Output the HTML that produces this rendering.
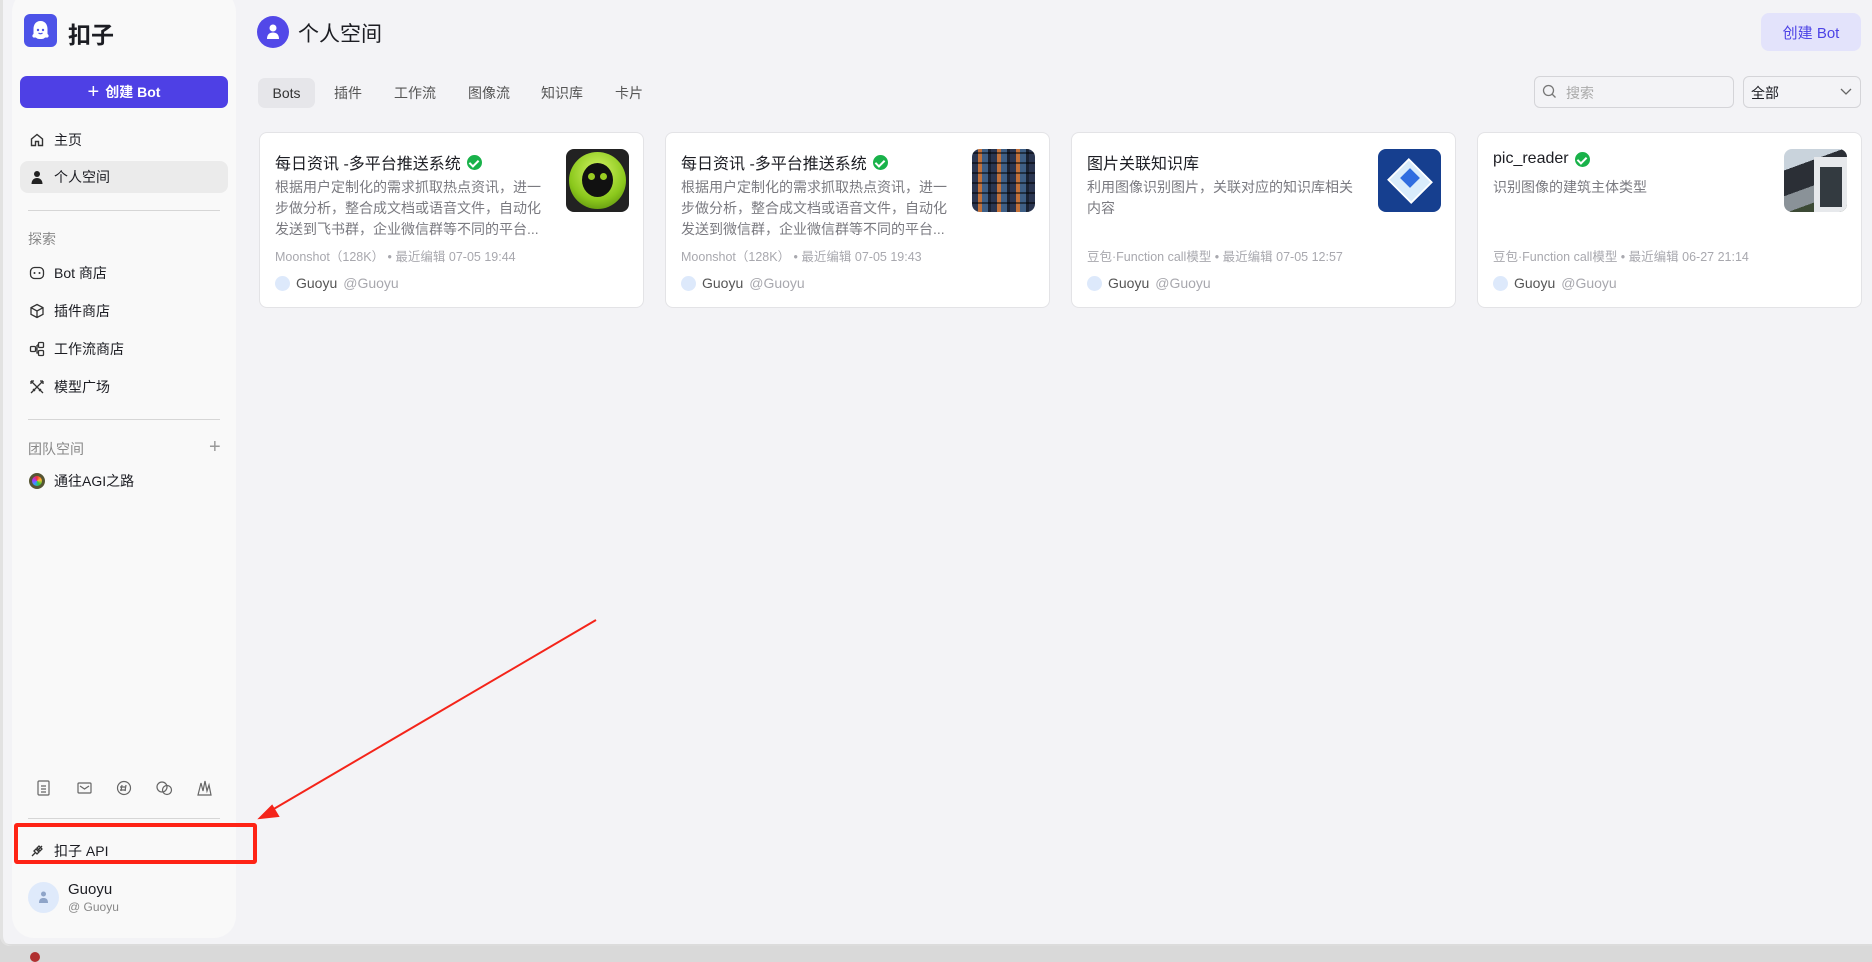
<!DOCTYPE html>
<html><head><meta charset="utf-8"><style>
*{box-sizing:border-box;margin:0;padding:0}
body{width:1872px;height:958px;overflow:hidden;background:#d9d9d9;font-family:"Liberation Sans","Noto Sans CJK SC",sans-serif;color:#1c1d23;position:relative}
.win{position:absolute;left:0;top:0;width:1872px;height:946px;background:#f3f3f6;box-shadow:inset 3px 0 0 #e2e2e2,inset 0 -2px 0 #dcdcdc;border-radius:0 0 0 10px}
.abs{position:absolute}
.side{position:absolute;left:12px;top:-10px;width:224px;height:948px;background:#f9f9f9;border-radius:22px}
.nav{position:absolute;left:20px;width:208px;height:32px;font-size:14px;display:flex;align-items:center;padding-left:9px;gap:9px;color:#1c1d23}
.nav svg{width:16px;height:16px}
.hr{position:absolute;left:28px;width:192px;height:1px;background:#d6d6d6}
.grey{color:#888;font-size:14px}
.tab{position:absolute;top:78px;height:30px;font-size:14px;line-height:30px;color:#555;text-align:center}
.card{position:absolute;top:132px;width:385px;height:176px;background:#fff;border:1px solid #e3e3e6;border-radius:8px}
.card .t{position:absolute;left:15px;top:17px;font-size:16px;color:#1c1d23;display:flex;align-items:center;gap:6px}
.ok{width:15px;height:15px;border-radius:50%;background:#19b24a;display:inline-block;position:relative}
.ok:after{content:"";position:absolute;left:4px;top:3px;width:4px;height:7px;border:solid #fff;border-width:0 2px 2px 0;transform:rotate(45deg)}
.card .d{position:absolute;left:15px;top:44px;width:270px;font-size:14px;line-height:21px;color:#7a7a80}
.card .m{position:absolute;left:15px;top:113px;font-size:12.5px;color:#a8a8ae;white-space:nowrap}
.card .u{position:absolute;left:15px;top:142px;font-size:14px;color:#555;display:flex;align-items:center;gap:6px}
.card .u i{width:15px;height:15px;border-radius:50%;background:#dde9fb;display:inline-block}
.card .u span{color:#a8a8ae}
.thumb{position:absolute;right:14px;top:16px;width:63px;height:63px;border-radius:8px;overflow:hidden}
</style></head><body>
<div class="win">
<div class="side"></div>
<div class="abs" style="left:24px;top:14px;width:33px;height:33px;background:#4d53e8;border-radius:6px"></div>
<svg class="abs" style="left:28px;top:18px" width="25" height="25" viewBox="0 0 25 25"><path d="M12.5 3C7.5 3 5.5 7 5.5 11v5c-1.5 1-1.5 3 0 3.5 1 .5 2-.5 3 .5 1 1 2.5 1 4 1s3 0 4-1 2-0 3-.5c1.5-.5 1.5-2.5 0-3.5v-5c0-4-2-8-7-8z" fill="#fff"/><circle cx="10" cy="12" r="1.2" fill="#4d53e8"/><circle cx="15" cy="12" r="1.2" fill="#4d53e8"/><path d="M10.5 15q2 1.5 4 0" stroke="#4d53e8" stroke-width="1.2" fill="none"/></svg>
<div class="abs" style="left:68px;top:16px;font-size:23px;font-weight:bold">扣子</div>
<div class="abs" style="left:20px;top:76px;width:208px;height:32px;background:#4e40e5;border-radius:7px;color:#fff;font-size:14px;font-weight:bold;display:flex;align-items:center;justify-content:center;gap:6px"><span style="font-size:20px;font-weight:normal;line-height:1">+</span>创建 Bot</div>
<div class="nav" style="top:124px"><svg viewBox="0 0 16 16"><path d="M2.5 7L8 2.5 13.5 7v6.5h-4v-4h-3v4h-4z" fill="none" stroke="#333" stroke-width="1.4"/></svg>主页</div>
<div class="nav" style="top:161px;background:#ebebeb;border-radius:8px"><svg viewBox="0 0 16 16"><circle cx="8" cy="5" r="3" fill="#222"/><path d="M2.5 15c0-4 2.5-6 5.5-6s5.5 2 5.5 6z" fill="#222"/></svg>个人空间</div>
<div class="hr" style="top:210px"></div>
<div class="abs grey" style="left:28px;top:229px">探索</div>
<div class="nav" style="top:257px"><svg viewBox="0 0 16 16"><rect x="1.5" y="2.5" width="13" height="11" rx="4" fill="none" stroke="#333" stroke-width="1.3"/><circle cx="5.5" cy="8" r="1" fill="#333"/><circle cx="10.5" cy="8" r="1" fill="#333"/></svg>Bot 商店</div>
<div class="nav" style="top:295px"><svg viewBox="0 0 16 16"><path d="M8 1.5l6 3.2v6.6L8 14.5 2 11.3V4.7zM2 4.7L8 8l6-3.3M8 8v6.5" fill="none" stroke="#333" stroke-width="1.3"/></svg>插件商店</div>
<div class="nav" style="top:333px"><svg viewBox="0 0 16 16"><rect x="1.5" y="5.5" width="5" height="5" rx="1" fill="none" stroke="#333" stroke-width="1.3"/><rect x="9.5" y="1.5" width="5" height="5" rx="1" fill="none" stroke="#333" stroke-width="1.3"/><rect x="9.5" y="9.5" width="5" height="5" rx="1" fill="none" stroke="#333" stroke-width="1.3"/><path d="M6.5 8h1.5M8 4v8h1.5M8 4h1.5" stroke="#333" stroke-width="1.3" fill="none"/></svg>工作流商店</div>
<div class="nav" style="top:371px"><svg viewBox="0 0 16 16"><path d="M2 2l12 12M14 2L2 14M2 2l3 0M2 2l0 3M14 2h-3M14 2v3M4 10l2 2M12 10l-2 2" stroke="#333" stroke-width="1.3" fill="none"/></svg>模型广场</div>
<div class="hr" style="top:419px"></div>
<div class="abs grey" style="left:28px;top:439px">团队空间</div>
<div class="abs" style="left:209px;top:436px;font-size:20px;color:#999">+</div>
<div class="nav" style="top:465px"><span style="width:16px;height:16px;border-radius:50%;background:conic-gradient(#e33,#fb3,#3c3,#39f,#a3f,#e33);display:inline-block;border:3px solid #553"></span>通往AGI之路</div>
<svg class="abs" style="left:36px;top:779px" width="180" height="18" viewBox="0 0 180 18" fill="none" stroke="#666" stroke-width="1.2"><rect x="2" y="2" width="11" height="14" rx="1"/><path d="M5 7h5M5 10h5M5 13h5"/><rect x="42" y="4" width="13" height="10" rx="1"/><path d="M44 7l4.5 3 4.5-3"/><circle cx="88" cy="9" r="6.5"/><path d="M86 6l-1 6M90 6l-1 6M84 8h6M84 11h6"/><circle cx="126" cy="8" r="5"/><circle cx="131" cy="11" r="4.5"/><path d="M162 16l3-12 2 8 2-10 2 10 2-6 2 10z"/></svg>
<div class="hr" style="top:818px"></div>
<div class="nav" style="top:835px"><svg viewBox="0 0 16 16"><path d="M3 13l3-3M10 6l3-3M5 8l3 3 2-2-3-3zM8 5l3 3 2-2-3-3z" fill="none" stroke="#333" stroke-width="1.3"/></svg>扣子 API</div>
<div class="abs" style="left:14px;top:823px;width:243px;height:41px;border:4px solid #fe2315;border-radius:3px"></div>
<div class="abs" style="left:28px;top:882px;width:31px;height:31px;border-radius:50%;background:#dfeafb"></div>
<svg class="abs" style="left:37px;top:890px" width="13" height="14" viewBox="0 0 13 14"><circle cx="6.5" cy="4" r="2.5" fill="#8ea4c8"/><path d="M2 13c0-4 2-5 4.5-5s4.5 1 4.5 5z" fill="#8ea4c8"/></svg>
<div class="abs" style="left:68px;top:881px;font-size:15px">Guoyu</div>
<div class="abs" style="left:68px;top:900px;font-size:12px;color:#888">@ Guoyu</div>
<svg class="abs" style="left:0;top:0" width="700" height="958"><line x1="596" y1="620" x2="272" y2="810" stroke="#f4241a" stroke-width="2"/><path d="M260 818l18-2-6-10z" fill="#f4241a" stroke="#f4241a" stroke-width="2"/></svg>
<div class="abs" style="left:257px;top:16px;width:32px;height:32px;border-radius:50%;background:#5248e8"></div>
<svg class="abs" style="left:265px;top:23px" width="16" height="18" viewBox="0 0 16 18"><circle cx="8" cy="5" r="3.5" fill="#fff"/><path d="M2 16c0-5 3-6.5 6-6.5s6 1.5 6 6.5z" fill="#fff"/></svg>
<div class="abs" style="left:298px;top:18px;font-size:21px">个人空间</div>
<div class="abs" style="left:1761px;top:13px;width:100px;height:38px;background:#e3e3fb;border-radius:8px;color:#4d43e6;font-size:15px;display:flex;align-items:center;justify-content:center">创建 Bot</div>
<div class="tab" style="left:258px;width:57px;background:#e6e6ea;border-radius:7px;color:#333">Bots</div>
<div class="tab" style="left:333px;width:30px">插件</div>
<div class="tab" style="left:393px;width:44px">工作流</div>
<div class="tab" style="left:467px;width:44px">图像流</div>
<div class="tab" style="left:540px;width:44px">知识库</div>
<div class="tab" style="left:614px;width:30px">卡片</div>
<div class="abs" style="left:1534px;top:76px;width:200px;height:32px;border:1px solid #d4d4d8;border-radius:6px;font-size:14px;color:#aaa;padding:6px 0 0 31px">搜索</div>
<svg class="abs" style="left:1542px;top:84px" width="15" height="15" viewBox="0 0 15 15"><circle cx="6.5" cy="6.5" r="5" fill="none" stroke="#777" stroke-width="1.3"/><path d="M10 10l3.5 3.5" stroke="#777" stroke-width="1.3"/></svg>
<div class="abs" style="left:1743px;top:76px;width:118px;height:32px;border:1px solid #d4d4d8;border-radius:6px;font-size:14px;padding:6px 0 0 7px">全部</div>
<svg class="abs" style="left:1840px;top:88px" width="12" height="8" viewBox="0 0 12 8"><path d="M1 1l5 5 5-5" fill="none" stroke="#666" stroke-width="1.3"/></svg>
<div class="card" style="left:259px"><div class="t">每日资讯 -多平台推送系统<i class="ok"></i></div><div class="d">根据用户定制化的需求抓取热点资讯，进一步做分析，整合成文档或语音文件，自动化发送到飞书群，企业微信群等不同的平台...</div><div class="m">Moonshot（128K） • 最近编辑 07-05 19:44</div><div class="u"><i></i>Guoyu <span>@Guoyu</span></div>
<div class="thumb" style="background:#222"><div style="position:absolute;left:3px;top:3px;width:57px;height:57px;border-radius:50%;background:radial-gradient(circle at 50% 35%,#d5f566,#8bc81c 60%,#4a7a0a)"></div><div style="position:absolute;left:16px;top:14px;width:31px;height:34px;border-radius:50%;background:#111"></div><div style="position:absolute;left:22px;top:24px;width:7px;height:7px;border-radius:50%;background:#9c2"></div><div style="position:absolute;left:34px;top:24px;width:7px;height:7px;border-radius:50%;background:#9c2"></div></div></div>
<div class="card" style="left:665px"><div class="t">每日资讯 -多平台推送系统<i class="ok"></i></div><div class="d">根据用户定制化的需求抓取热点资讯，进一步做分析，整合成文档或语音文件，自动化发送到微信群，企业微信群等不同的平台...</div><div class="m">Moonshot（128K） • 最近编辑 07-05 19:43</div><div class="u"><i></i>Guoyu <span>@Guoyu</span></div>
<div class="thumb" style="background:repeating-linear-gradient(90deg,#2a3550 0 6px,#c2713a 6px 10px,#3f5f85 10px 16px,#1a2233 16px 19px),#333"><div style="position:absolute;inset:0;background:repeating-linear-gradient(0deg,transparent 0 8px,rgba(0,0,0,.5) 8px 10px)"></div></div></div>
<div class="card" style="left:1071px"><div class="t">图片关联知识库</div><div class="d">利用图像识别图片，关联对应的知识库相关内容</div><div class="m">豆包·Function call模型 • 最近编辑 07-05 12:57</div><div class="u"><i></i>Guoyu <span>@Guoyu</span></div>
<div class="thumb" style="background:#163f8f"><div style="position:absolute;left:12px;top:14px;width:40px;height:36px;background:#d9ecfb;transform:rotate(45deg) scale(.85);border:2px solid #fff"></div><div style="position:absolute;left:25px;top:22px;width:14px;height:14px;background:#2f6de0;transform:rotate(45deg)"></div></div></div>
<div class="card" style="left:1477px"><div class="t">pic_reader<i class="ok"></i></div><div class="d">识别图像的建筑主体类型</div><div class="m">豆包·Function call模型 • 最近编辑 06-27 21:14</div><div class="u"><i></i>Guoyu <span>@Guoyu</span></div>
<div class="thumb" style="background:linear-gradient(160deg,#c9d3dc 0 25%,#2b2f36 25% 55%,#8a9298 55% 75%,#3c4a35 75%)"><div style="position:absolute;left:30px;top:8px;width:33px;height:55px;background:#e7e9ec"></div><div style="position:absolute;left:36px;top:18px;width:22px;height:40px;background:#333a40"></div></div></div>
</div>
<div class="abs" style="left:30px;top:952px;width:10px;height:10px;border-radius:50%;background:#b03030"></div>
</body></html>
